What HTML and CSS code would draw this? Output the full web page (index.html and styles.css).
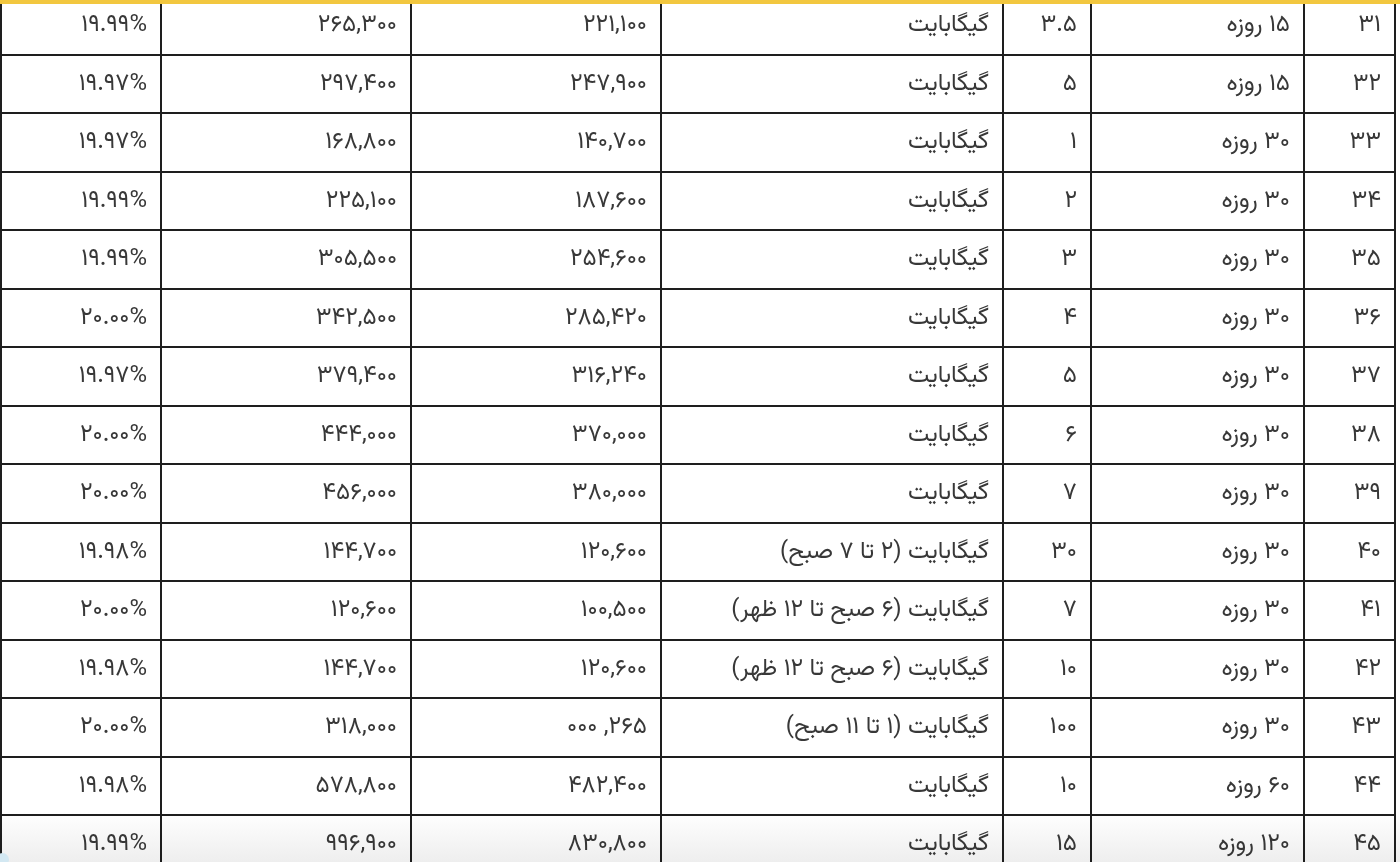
FILE: index.html
```html
<!DOCTYPE html>
<html lang="fa">
<head>
<meta charset="utf-8">
<title>تعرفه بسته‌ها</title>
<link rel="stylesheet" href="styles.css">
</head>
<body>
<div class="page">
  <div class="topbar"></div>
  <table class="grid" dir="rtl">
    <colgroup>
      <col class="c-idx"><col class="c-dur"><col class="c-vol"><col class="c-unit"><col class="c-p1"><col class="c-p2"><col class="c-pct">
    </colgroup>
    <tbody>
      <tr><td>۳۱</td><td>۱۵ روزه</td><td>۳.۵</td><td>گیگابایت</td><td>۲۲۱,۱۰۰</td><td>۲۶۵,۳۰۰</td><td>۱۹.۹۹%</td></tr>
      <tr><td>۳۲</td><td>۱۵ روزه</td><td>۵</td><td>گیگابایت</td><td>۲۴۷,۹۰۰</td><td>۲۹۷,۴۰۰</td><td>۱۹.۹۷%</td></tr>
      <tr><td>۳۳</td><td>۳۰ روزه</td><td>۱</td><td>گیگابایت</td><td>۱۴۰,۷۰۰</td><td>۱۶۸,۸۰۰</td><td>۱۹.۹۷%</td></tr>
      <tr><td>۳۴</td><td>۳۰ روزه</td><td>۲</td><td>گیگابایت</td><td>۱۸۷,۶۰۰</td><td>۲۲۵,۱۰۰</td><td>۱۹.۹۹%</td></tr>
      <tr><td>۳۵</td><td>۳۰ روزه</td><td>۳</td><td>گیگابایت</td><td>۲۵۴,۶۰۰</td><td>۳۰۵,۵۰۰</td><td>۱۹.۹۹%</td></tr>
      <tr><td>۳۶</td><td>۳۰ روزه</td><td>۴</td><td>گیگابایت</td><td>۲۸۵,۴۲۰</td><td>۳۴۲,۵۰۰</td><td>۲۰.۰۰%</td></tr>
      <tr><td>۳۷</td><td>۳۰ روزه</td><td>۵</td><td>گیگابایت</td><td>۳۱۶,۲۴۰</td><td>۳۷۹,۴۰۰</td><td>۱۹.۹۷%</td></tr>
      <tr><td>۳۸</td><td>۳۰ روزه</td><td>۶</td><td>گیگابایت</td><td>۳۷۰,۰۰۰</td><td>۴۴۴,۰۰۰</td><td>۲۰.۰۰%</td></tr>
      <tr><td>۳۹</td><td>۳۰ روزه</td><td>۷</td><td>گیگابایت</td><td>۳۸۰,۰۰۰</td><td>۴۵۶,۰۰۰</td><td>۲۰.۰۰%</td></tr>
      <tr><td>۴۰</td><td>۳۰ روزه</td><td>۳۰</td><td>گیگابایت (۲ تا ۷ صبح)</td><td>۱۲۰,۶۰۰</td><td>۱۴۴,۷۰۰</td><td>۱۹.۹۸%</td></tr>
      <tr><td>۴۱</td><td>۳۰ روزه</td><td>۷</td><td>گیگابایت (۶ صبح تا ۱۲ ظهر)</td><td>۱۰۰,۵۰۰</td><td>۱۲۰,۶۰۰</td><td>۲۰.۰۰%</td></tr>
      <tr><td>۴۲</td><td>۳۰ روزه</td><td>۱۰</td><td>گیگابایت (۶ صبح تا ۱۲ ظهر)</td><td>۱۲۰,۶۰۰</td><td>۱۴۴,۷۰۰</td><td>۱۹.۹۸%</td></tr>
      <tr><td>۴۳</td><td>۳۰ روزه</td><td>۱۰۰</td><td>گیگابایت (۱ تا ۱۱ صبح)</td><td>۲۶۵, ۰۰۰</td><td>۳۱۸,۰۰۰</td><td>۲۰.۰۰%</td></tr>
      <tr><td>۴۴</td><td>۶۰ روزه</td><td>۱۰</td><td>گیگابایت</td><td>۴۸۲,۴۰۰</td><td>۵۷۸,۸۰۰</td><td>۱۹.۹۸%</td></tr>
      <tr><td>۴۵</td><td>۱۲۰ روزه</td><td>۱۵</td><td>گیگابایت</td><td>۸۳۰,۸۰۰</td><td>۹۹۶,۹۰۰</td><td>۱۹.۹۹%</td></tr>
    </tbody>
  </table>
  <div class="fade"></div>
  <div class="corner-icon"></div>
</div>
</body>
</html>
```
FILE: styles.css
```css
html, body {
  margin: 0;
  padding: 0;
  background: #ffffff;
}
body {
  width: 1400px;
  height: 862px;
  overflow: hidden;
  font-family: "Vazirmatn", "Noto Sans Arabic", "DejaVu Sans", sans-serif;
  color: #383838;
}
.page {
  position: relative;
  width: 1400px;
  height: 862px;
  overflow: hidden;
}
.topbar {
  position: absolute;
  top: 0;
  left: 0;
  right: 0;
  height: 4px;
  background: #f2c73f;
  z-index: 2;
}
.grid {
  border-collapse: collapse;
  table-layout: fixed;
  width: 1394px;
  margin-top: -5px;
  font-size: 24px;
}
.c-idx { width: 91px; }
.c-dur { width: 213px; }
.c-vol { width: 88px; }
.c-unit { width: 342px; }
.c-p1 { width: 250px; }
.c-p2 { width: 250px; }
.c-pct { width: 160px; }
.grid td {
  border: 2px solid #1e1e1e;
  height: 58.5px;
  box-sizing: border-box;
  padding: 0 13px;
  text-align: right;
  vertical-align: middle;
  white-space: nowrap;
  line-height: 1;
}
.fade {
  position: absolute;
  left: 0;
  right: 0;
  bottom: 0;
  height: 50px;
  background: linear-gradient(to bottom, #ffffff, #eeeeee);
  mix-blend-mode: multiply;
  pointer-events: none;
}
.corner-icon {
  position: absolute;
  left: -4px;
  bottom: -4px;
  width: 13px;
  height: 13px;
  border-radius: 50%;
  background: #d3e8f2;
}
```
